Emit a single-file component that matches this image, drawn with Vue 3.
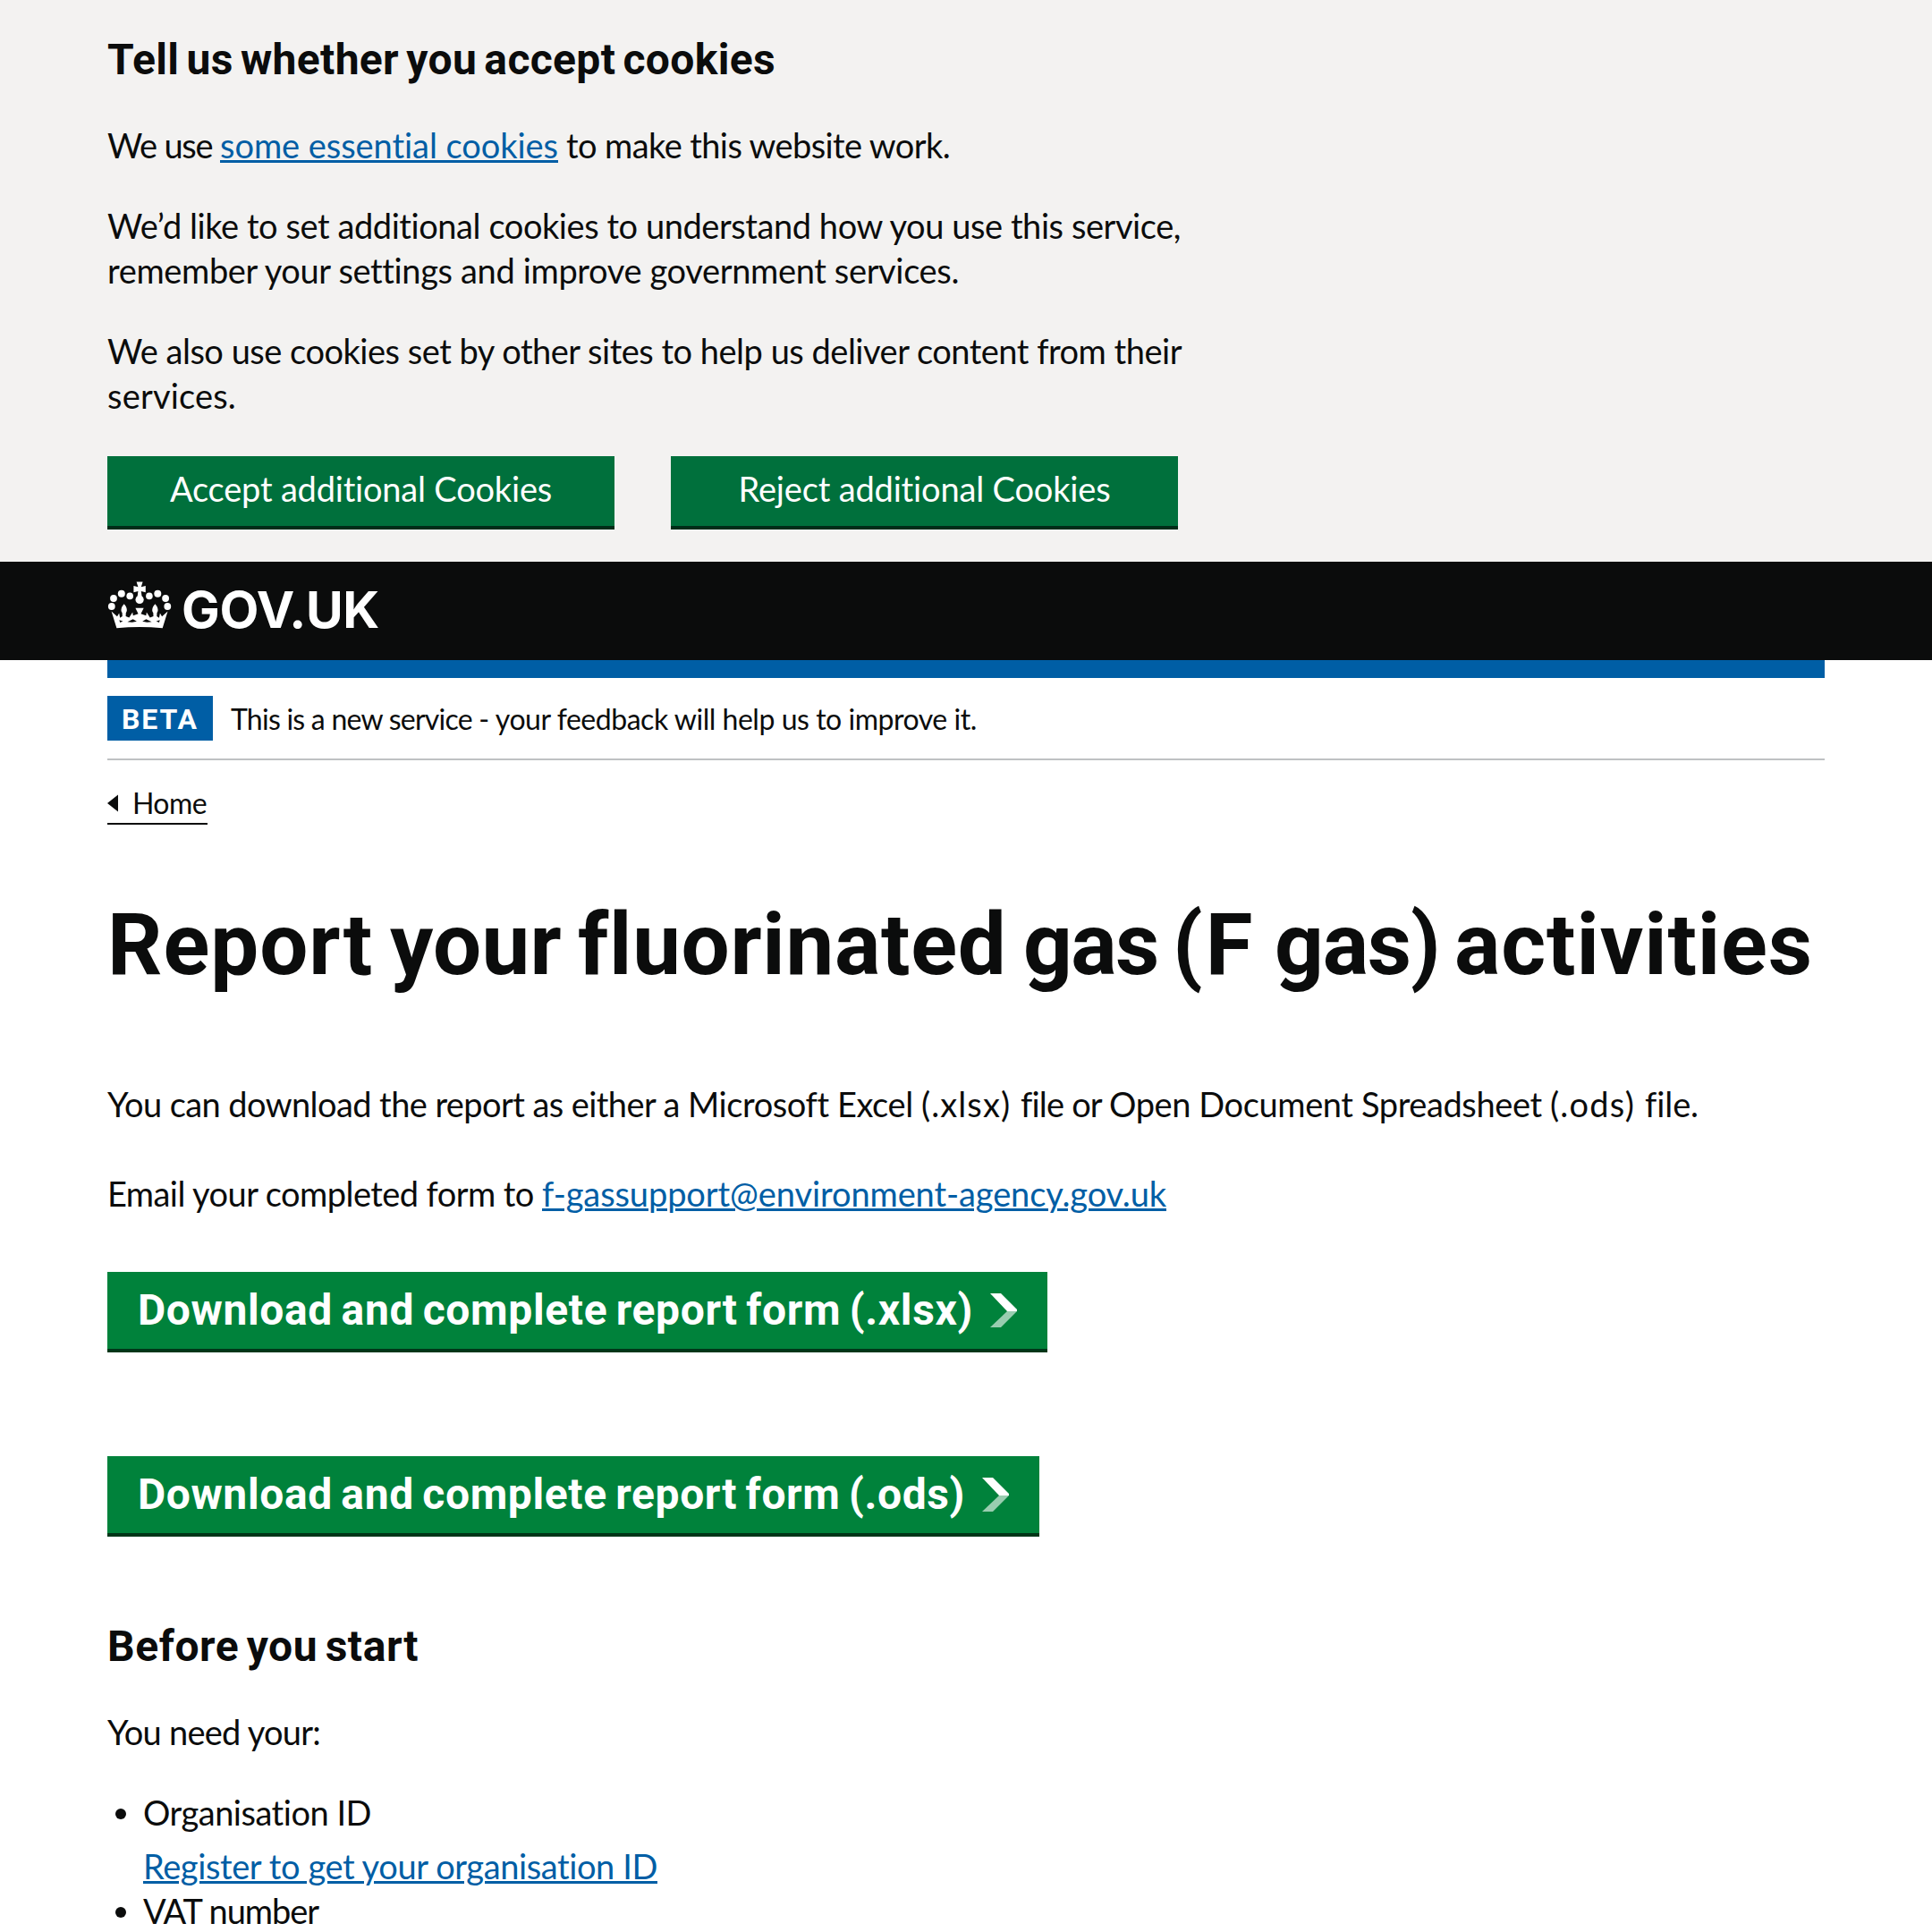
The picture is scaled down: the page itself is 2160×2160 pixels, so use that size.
<script setup>
// Spreads a run of text over a fixed advance width by adjusting its tracking.
const vFit = {
  mounted(el, { value }) {
    el.style.letterSpacing = '0px'
    const natural = el.getBoundingClientRect().width
    const count = el.textContent.length
    el.style.letterSpacing = `${(value - natural) / count}px`
  },
}

const paragraphs = [
  [
    { text: 'We’d like to set additional cookies to understand how you use this service,', width: 1200 },
    { text: 'remember your settings and improve government services.', width: 952 },
  ],
  [
    { text: 'We also use cookies set by other sites to help us deliver content from their', width: 1201 },
    { text: 'services.', width: 144 },
  ],
]

const choices = [
  { text: 'Accept additional Cookies', width: 427 },
  { text: 'Reject additional Cookies', width: 416 },
]

const title = [
  { text: 'Report ', width: 316 },
  { text: 'your ', width: 210 },
  { text: 'fluorinated ', width: 498 },
  { text: 'gas ', width: 167 },
  { text: '(F ', width: 114 },
  { text: 'gas) ', width: 201 },
  { text: 'activities', width: 401 },
]

const intro = [
  { text: 'You can download the report as either a ', width: 649 },
  { text: 'Microsoft Excel ', width: 261 },
  { text: '(.xlsx) ', width: 111 },
  { text: 'file or ', width: 99 },
  { text: 'Open Document Spreadsheet ', width: 493 },
  { text: '(.ods) ', width: 106 },
  { text: 'file.', width: 60 },
]

const downloads = [
  { text: 'Download and complete report form (.xlsx)', width: 934 },
  { text: 'Download and complete report form (.ods)', width: 925 },
]
</script>

<template>
  <div class="page">
    <section class="cookies">
      <h2 class="heading"><span v-fit="747" class="line">Tell us whether you accept cookies</span></h2>
      <p class="text first">
        <span v-fit="126" class="line">We use </span><a class="link"><span v-fit="378" class="line">some essential cookies</span></a><span v-fit="438" class="line"> to make this website work.</span>
      </p>
      <p v-for="(lines, i) in paragraphs" :key="i" class="text">
        <template v-for="(l, j) in lines" :key="j"><span v-fit="l.width" class="line">{{ l.text }}</span><br></template>
      </p>
      <div class="choices">
        <button v-for="c in choices" :key="c.text" class="choice" type="button">
          <span v-fit="c.width" class="line">{{ c.text }}</span>
        </button>
      </div>
    </section>

    <header class="header">
      <svg class="crown" width="72" height="54" viewBox="0 0 72 54" fill="#fff">
        <g>
          <circle cx="4.8" cy="28" r="3.9" /><circle cx="7" cy="19" r="3.9" />
          <circle cx="15.8" cy="13.8" r="4" /><circle cx="25.2" cy="16.4" r="3.8" />
          <circle cx="67.3" cy="28" r="3.9" /><circle cx="65.1" cy="19" r="3.9" />
          <circle cx="56.3" cy="13.8" r="4" /><circle cx="46.9" cy="16.4" r="3.8" />
          <circle cx="36.1" cy="20.4" r="4.6" />
        </g>
        <path d="M32.6 0.6h7l-1.8 5.6 5-1.1v7.2l-5-1.2 0.9 7h-5.200l0.900-7-5 1.200V5.100l5 1.100z" />
        <path d="M4.600 33.500l6.400 5.700 2.200-3.600 1 5.200 2.600-1.700-0.200-4.200c-1.800-1.600-1.500-6 2.100-9.700 3.600 3.700 3.900 8.100 2.100 9.700l-0.200 4.200 3.800 1.300 3.800-5.800 0.600 3.700 5.800-2-3.200-6.500h9.300l-3.200 6.500 5.800 2 0.600-3.700 3.800 5.800 3.800-1.300-0.200-4.200c-1.800-1.600-1.500-6 2.100-9.700 3.600 3.700 3.900 8.100 2.100 9.700l-0.200 4.200 2.600 1.700 1-5.200 2.200 3.600 6.400-5.700-5.800 18.800c-17-1.800-34.300-1.800-51.300 0z" />
        <g fill="#0b0c0c">
          <path d="M13.400 43.200l4 1.300-3.200 1.600z" />
          <path d="M58.700 43.200l-4 1.300 3.200 1.600z" />
          <path d="M22.500 45.300l6.200-3.100 4.200 2.600-5.200 1z" />
          <path d="M49.600 45.300l-6.200-3.100-4.200 2.600 5.200 1z" />
        </g>
      </svg>
      <span v-fit="221" class="wordmark">GOV.UK</span>
    </header>

    <main class="main">
      <div class="bar"></div>
      <div class="phase">
        <strong class="tag"><span v-fit="86" class="line">BETA</span></strong>
        <span class="notice"><span v-fit="295" class="line">This is a new service - </span><span v-fit="538" class="line">your feedback will help us to improve it.</span></span>
      </div>
      <a class="back">
        <svg width="12" height="20" viewBox="0 0 12 20" fill="#0b0c0c"><path d="M0 10L12 .5v19z" /></svg>
        <span v-fit="83" class="line home">Home</span>
      </a>

      <h1 class="title"><span v-for="t in title" :key="t.text" v-fit="t.width" class="line">{{ t.text }}</span></h1>

      <p class="text intro"><span v-for="t in intro" :key="t.text" v-fit="t.width" class="line">{{ t.text }}</span></p>
      <p class="text email">
        <span v-fit="486" class="line">Email your completed form to </span><a class="link"><span v-fit="698" class="line">f-gassupport@environment-agency.gov.uk</span></a>
      </p>

      <div class="downloads">
        <a v-for="d in downloads" :key="d.text" class="start">
          <span v-fit="d.width" class="line">{{ d.text }}</span>
          <svg width="30" height="38" viewBox="0 0 30 38">
            <path fill="#fff" d="M0 0h12l18 18v2H19z" />
            <path fill="#99cdb0" d="M19 20h11L12 38H0z" />
          </svg>
        </a>
      </div>

      <h2 class="heading before"><span v-fit="348" class="line">Before you start</span></h2>
      <p class="text first"><span v-fit="238" class="line">You need your:</span></p>
      <ul class="list">
        <li class="item">
          <span v-fit="255" class="line">Organisation ID</span>
          <p class="register"><a class="link"><span v-fit="575" class="line">Register to get your organisation ID</span></a></p>
        </li>
        <li class="item"><span v-fit="196" class="line">VAT number</span></li>
      </ul>
    </main>
  </div>
</template>

<style>
body {
  margin: 0;
  background: #fff;
}
</style>

<style scoped>
.page {
  height: 2160px;
  overflow: hidden;
  color: #0b0c0c;
  font-family: Lato, "Liberation Sans", sans-serif;
  font-size: 38px;
  line-height: 50px;
  font-variant-ligatures: none;
}
.line {
  white-space: pre;
}
.cookies {
  box-sizing: border-box;
  height: 628px;
  padding: 37px 120px 0;
  background: #f3f2f1;
}
.heading {
  margin: 0 0 39px;
  font-family: Roboto, "Liberation Sans", sans-serif;
  font-size: 48px;
  font-weight: 700;
  line-height: 60px;
  word-spacing: -4px;
}
.text {
  margin: 0 0 40px;
  white-space: nowrap;
}
.first {
  margin-top: 40px;
}
.link {
  color: #005ea5;
  text-decoration: underline;
  text-decoration-thickness: 3px;
  text-underline-offset: 2px;
}
.choices {
  display: flex;
  gap: 63px;
  margin-top: 43px;
}
.choice {
  box-sizing: border-box;
  width: 567px;
  height: 78px;
  padding: 11px 0 17px;
  border: 0;
  background: #00703c;
  box-shadow: 0 4px 0 #002d18;
  color: #fff;
  font: inherit;
  text-align: center;
}
.header {
  display: flex;
  gap: 11px;
  box-sizing: border-box;
  height: 110px;
  padding: 22px 120px 0;
  background: #0b0c0c;
  color: #fff;
}
.wordmark {
  height: 60px;
  margin-top: 2px;
  font-family: Inter, "Liberation Sans", sans-serif;
  font-size: 57px;
  font-weight: 700;
  line-height: 60px;
}
.main {
  padding: 0 120px;
}
.bar {
  height: 20px;
  background: #005ea5;
}
.phase {
  display: flex;
  gap: 20px;
  box-sizing: border-box;
  height: 92px;
  padding: 20px 0;
  border-bottom: 2px solid #bfc1c3;
  font-size: 32px;
}
.notice {
  padding-top: 1px;
}
.tag {
  box-sizing: border-box;
  width: 118px;
  height: 50px;
  padding-left: 16px;
  background: #005ea5;
  color: #fff;
  font-family: Roboto, "Liberation Sans", sans-serif;
  font-weight: 700;
  line-height: 52px;
}
.back {
  display: flex;
  align-items: center;
  gap: 16px;
  box-sizing: border-box;
  width: 112px;
  height: 50px;
  margin-top: 22px;
  border-bottom: 2px solid #0b0c0c;
  font-size: 32px;
  line-height: 50px;
}
.back svg {
  flex: none;
  margin-bottom: -3px;
}
.home {
  padding-top: 3px;
}
.title {
  margin: 84px 0 103px;
  font-family: Roboto, "Liberation Sans", sans-serif;
  font-size: 96px;
  font-weight: 700;
  line-height: 100px;
  white-space: nowrap;
  word-spacing: -6px;
}
.intro {
  margin-bottom: 50px;
}
.email {
  margin-bottom: 63px;
}
.downloads {
  display: flex;
  flex-direction: column;
  align-items: flex-start;
  gap: 120px;
}
.start {
  display: flex;
  gap: 19px;
  box-sizing: border-box;
  height: 86px;
  padding: 13px 34px 13px 34px;
  background: #00823b;
  box-shadow: 0 4px 0 #003618;
  color: #fff;
  font-family: Roboto, "Liberation Sans", sans-serif;
  font-size: 48px;
  font-weight: 700;
  line-height: 60px;
  word-spacing: -3px;
}
.start svg {
  flex: none;
  margin-top: 11px;
}
.before {
  margin-top: 97px;
}
.list {
  margin: 0;
  padding: 0 0 0 40px;
  list-style: none;
}
.item {
  position: relative;
}
.item::before {
  content: "";
  position: absolute;
  left: -31px;
  top: 21px;
  width: 12px;
  height: 12px;
  border-radius: 50%;
  background: #0b0c0c;
}
.register {
  margin: 10px 0 0;
}
</style>
